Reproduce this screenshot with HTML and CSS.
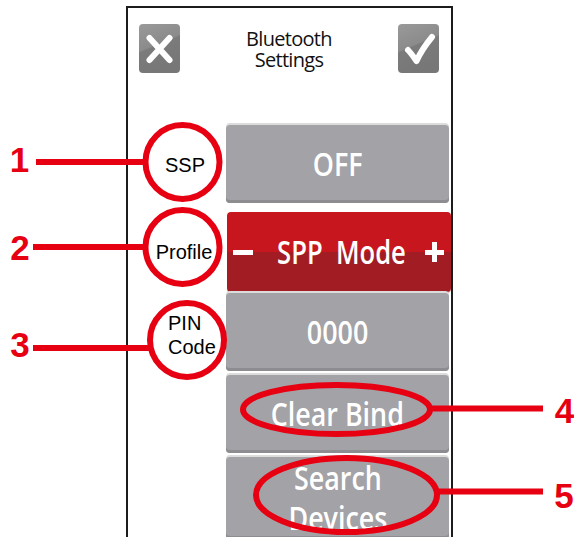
FILE: index.html
```html
<!DOCTYPE html>
<html lang="en">
<head>
<meta charset="utf-8">
<title>Bluetooth Settings</title>
<link rel="stylesheet" href="styles.css">
</head>
<body>
<div class="screen">
  <header class="topbar">
    <div class="icon-btn" aria-label="Cancel">
      <svg width="41" height="49" viewBox="0 0 41 49">
        <defs>
          <linearGradient id="gx" x1="0" y1="0" x2="0.35" y2="1">
            <stop offset="0" stop-color="#9a9a9a"/>
            <stop offset="0.5" stop-color="#8b8b8b"/>
            <stop offset="0.53" stop-color="#7b7b7b"/>
            <stop offset="1" stop-color="#777"/>
          </linearGradient>
        </defs>
        <rect width="41" height="49" rx="4" fill="url(#gx)"/>
        <path d="M10.5 14 L30.5 36 M30.5 14 L10.5 36" stroke="#fff" stroke-width="6" stroke-linecap="round"/>
      </svg>
    </div>
    <h1 class="title"><span class="title-line">Bluetooth</span><span class="title-line">Settings</span></h1>
    <div class="icon-btn" aria-label="Confirm">
      <svg width="41" height="49" viewBox="0 0 41 49">
        <defs>
          <linearGradient id="gc" x1="0" y1="0" x2="0.35" y2="1">
            <stop offset="0" stop-color="#9a9a9a"/>
            <stop offset="0.5" stop-color="#8b8b8b"/>
            <stop offset="0.53" stop-color="#7b7b7b"/>
            <stop offset="1" stop-color="#777"/>
          </linearGradient>
        </defs>
        <rect width="41" height="49" rx="4" fill="url(#gc)"/>
        <path d="M10 26 Q13 29 18.5 37 Q24 25 34 13" fill="none" stroke="#fff" stroke-width="6" stroke-linecap="round" stroke-linejoin="round"/>
      </svg>
    </div>
  </header>

  <div class="rows">
    <div class="row">
      <div class="label label-ssp">SSP</div>
      <div class="btn"><span class="btn-text">OFF</span></div>
    </div>
    <div class="row row-profile">
      <div class="label">Profile</div>
      <div class="btn btn-red">
        <svg class="sign" width="20" height="20" viewBox="0 0 20 20"><rect x="0" y="8" width="20" height="5" fill="#fff"/></svg>
        <span class="btn-text">SPP&nbsp; Mode</span>
        <svg class="sign" width="20" height="20" viewBox="0 0 20 20"><rect x="0" y="8" width="19" height="5" fill="#fff"/><rect x="7" y="0" width="5" height="20" fill="#fff"/></svg>
      </div>
    </div>
    <div class="row">
      <div class="label label-pin">PIN<br>Code</div>
      <div class="btn"><span class="btn-text">0000</span></div>
    </div>
    <div class="row">
      <div class="label"></div>
      <div class="btn"><span class="btn-text">Clear Bind</span></div>
    </div>
    <div class="row">
      <div class="label"></div>
      <div class="btn btn-tall"><span class="btn-text">Search<br>Devices</span></div>
    </div>
  </div>
</div>

<svg class="annotations" width="574" height="537" viewBox="0 0 574 537">
  <g fill="none" stroke="#e60012" stroke-width="6">
    <circle cx="182.5" cy="162" r="37"/>
    <circle cx="182.5" cy="247" r="37"/>
    <circle cx="187" cy="340" r="37"/>
    <ellipse cx="336.5" cy="409.5" rx="93.5" ry="24.5"/>
    <ellipse cx="346.5" cy="495" rx="90.5" ry="37"/>
    <path d="M36 162 H146"/>
    <path d="M33 247 H146"/>
    <path d="M33 348 H151"/>
    <path d="M431 408.5 H543"/>
    <path d="M437 491.5 H543"/>
  </g>
  <g class="num" fill="#e60012" text-anchor="middle">
    <text x="19.5" y="172">1</text>
    <text x="20" y="260">2</text>
    <text x="20" y="357">3</text>
    <text x="564.5" y="423">4</text>
    <text x="564" y="508">5</text>
  </g>
</svg>
</body>
</html>
```

FILE: styles.css
```css
html, body {
  margin: 0;
  padding: 0;
  height: 537px;
  overflow: hidden;
  background: #fff;
}

body {
  position: relative;
  font-family: "Open Sans", "Noto Sans", sans-serif;
}

.screen {
  box-sizing: border-box;
  width: 327px;
  height: 620px;
  margin: 6px 0 0 126px;
  border: 2px solid #1c1c1c;
  border-bottom: none;
}

.topbar {
  display: flex;
  justify-content: space-between;
  align-items: flex-start;
  padding: 16px 12px 0 11px;
}

.icon-btn {
  width: 41px;
  height: 49px;
  flex: none;
}

.icon-btn svg {
  display: block;
}

.title {
  flex: 1;
  display: flex;
  flex-direction: column;
  align-items: center;
  gap: 1px;
  margin: 5px 0 0;
  font-size: 20px;
  line-height: 20px;
  font-weight: 400;
  color: #111;
  letter-spacing: -0.7px;
}

.title-line {
  display: block;
}

.rows {
  display: flex;
  flex-direction: column;
  gap: 4px;
  padding-top: 52px;
}

.row {
  display: flex;
  align-items: center;
}

.row-profile {
  margin-top: 5px;
  margin-bottom: -3px;
}

.label {
  box-sizing: border-box;
  width: 98px;
  flex: none;
  padding-left: 14px;
  text-align: center;
  font-family: "Liberation Sans", Arial, sans-serif;
  font-size: 20px;
  line-height: 24px;
  color: #000;
}

.label-ssp {
  padding-left: 16px;
  padding-top: 2px;
}

.label-pin {
  padding-left: 40px;
  padding-top: 6px;
  text-align: left;
}

.btn {
  flex: 1;
  height: 78px;
  margin-right: 2px;
  display: flex;
  align-items: center;
  justify-content: center;
  background: #a3a2a7;
  border-radius: 4px;
  box-shadow: inset 0 -3px 0 #8d8c90, 0 -2px 0 #dcdcdc;
  color: #fff;
}

.btn-red {
  height: 80px;
  margin-right: 0;
  margin-left: 1px;
  justify-content: space-between;
  padding: 0 6px;
  background: linear-gradient(#c8161e 50%, #a21d23 50%);
  box-shadow: 0 1px 0 #e6a3a3;
}

.btn-tall {
  height: 82px;
}

.sign {
  display: block;
  flex: none;
}

.btn-text {
  display: inline-block;
  font-size: 32px;
  font-weight: 600;
  line-height: 40px;
  white-space: nowrap;
  text-align: center;
  transform: scaleX(0.84);
}

.btn-red .btn-text {
  transform: scaleX(0.8);
  margin-left: 4px;
}

.annotations {
  position: absolute;
  left: 0;
  top: 0;
  pointer-events: none;
}

.num text {
  font-family: "Liberation Sans", Arial, sans-serif;
  font-weight: 700;
  font-size: 35px;
}
```
